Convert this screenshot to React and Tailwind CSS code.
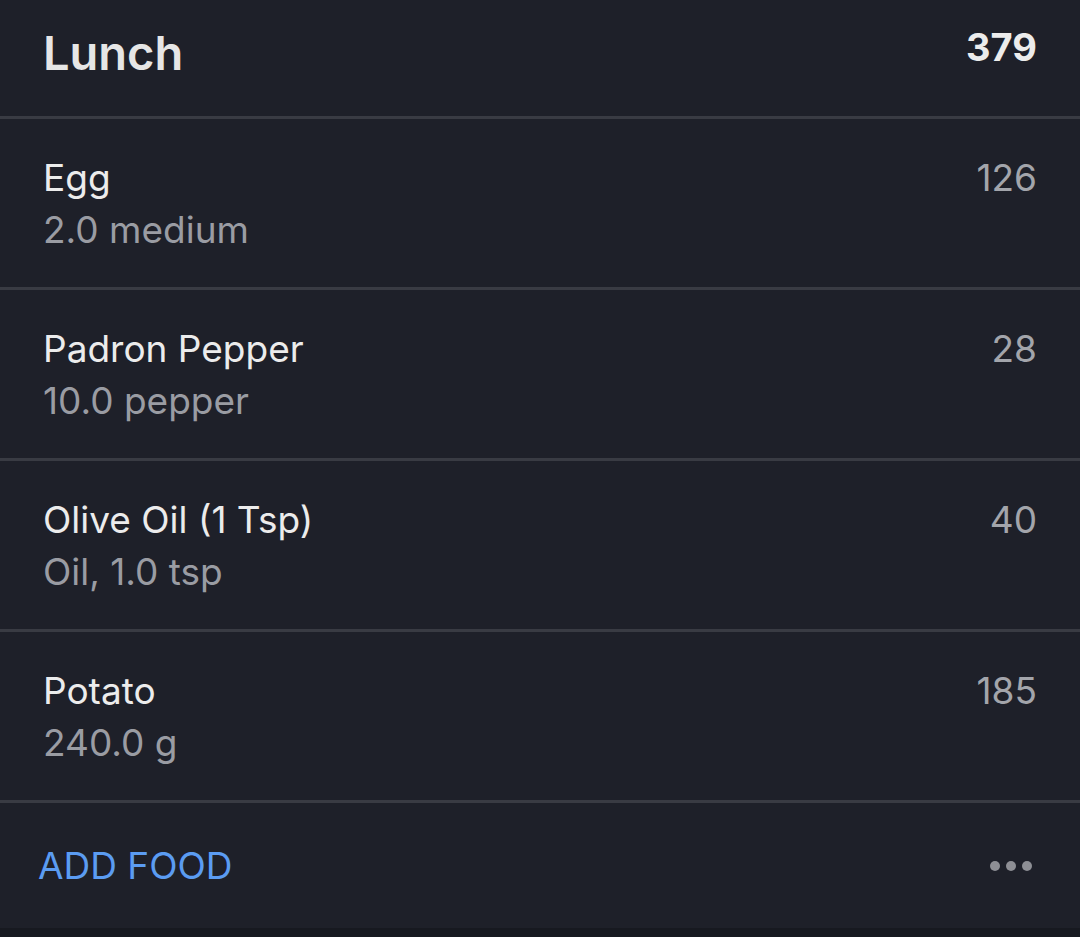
const items = [
  { name: "Egg", detail: "2.0 medium", kcal: 126 },
  { name: "Padron Pepper", detail: "10.0 pepper", kcal: 28 },
  { name: "Olive Oil (1 Tsp)", detail: "Oil, 1.0 tsp", kcal: 40 },
  { name: "Potato", detail: "240.0 g", kcal: 185 },
];

export default function App() {
  return (
    <div className="w-[1080px] h-[937px] bg-[#1e2029] font-['Inter',sans-serif] flex flex-col overflow-hidden">
      {/* Header */}
      <div className="h-[119px] shrink-0 px-[43px] pt-[24px] flex items-start justify-between border-b-[3px] border-[#393b43]">
        <h2 className="text-[47px] leading-[58px] font-semibold text-[#e6e6e6]">Lunch</h2>
        <span className="text-[38px] leading-[46px] font-bold text-[#ececec]">379</span>
      </div>

      {/* Food rows */}
      {items.map((item) => (
        <div
          key={item.name}
          className="h-[171px] shrink-0 px-[43px] pt-[33px] flex items-start justify-between border-b-[3px] border-[#393b43]"
        >
          <div className="flex flex-col">
            <span className="text-[37px] leading-[52px] text-[#ececec]">{item.name}</span>
            <span className="text-[37px] leading-[52px] text-[#9a9ca3]">{item.detail}</span>
          </div>
          <span className="text-[37px] leading-[52px] text-[#a3a5ab]">{item.kcal}</span>
        </div>
      ))}

      {/* Footer */}
      <div className="h-[125px] shrink-0 pl-[38px] pr-[48px] flex items-center justify-between">
        <button className="text-[37px] text-[#5b9cf2] uppercase">Add Food</button>
        <div className="flex gap-[6px]">
          <span className="w-[10px] h-[10px] rounded-full bg-[#8e8f95]" />
          <span className="w-[10px] h-[10px] rounded-full bg-[#8e8f95]" />
          <span className="w-[10px] h-[10px] rounded-full bg-[#8e8f95]" />
        </div>
      </div>
      <div className="flex-1 bg-[#171920]" />
    </div>
  );
}
